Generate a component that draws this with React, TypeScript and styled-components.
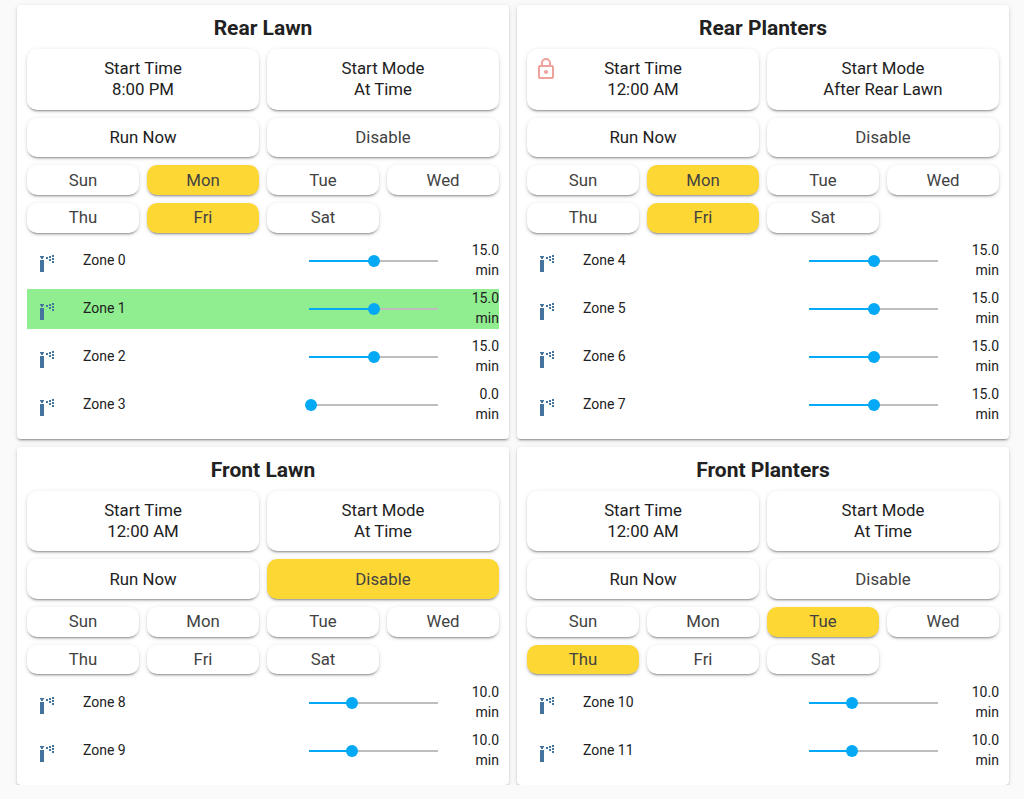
import React from 'react';
import styled, { createGlobalStyle } from 'styled-components';

const GlobalStyle = createGlobalStyle`
  *, *::before, *::after { box-sizing: border-box; }
  body {
    margin: 0;
    background: #fafafa;
    color: #212121;
    font-family: Roboto, "Liberation Sans", sans-serif;
    font-size: 14px;
  }
`;

const shadow = '0 2px 2px 0 rgba(0,0,0,0.14), 0 1px 5px 0 rgba(0,0,0,0.12), 0 3px 1px -2px rgba(0,0,0,0.2)';

const Board = styled.main`
  display: grid;
  grid-template-columns: 492px 492px;
  gap: 8px;
  padding: 5.3px 0 0 17px;
`;

const Card = styled.section`
  padding: 0 10px 14.15px;
  background: #fff;
  border-radius: 4px;
  box-shadow: ${shadow};
`;

const Title = styled.h2`
  margin: 0;
  height: 43.9px;
  padding-top: 2px;
  font-size: 21px;
  font-weight: 700;
  line-height: 42px;
  text-align: center;
`;

const ActionGrid = styled.div`
  display: grid;
  grid-template-columns: repeat(2, 1fr);
  gap: 8.1px 8px;
  margin-bottom: 8px;
`;

const DayGrid = styled.div`
  display: grid;
  grid-template-columns: repeat(4, 1fr);
  gap: 7.8px 8px;
  margin-bottom: 8.1px;
`;

const Button = styled.button<{ $height: number; $active?: boolean; $muted?: boolean }>`
  position: relative;
  display: flex;
  flex-direction: column;
  align-items: center;
  justify-content: center;
  height: ${(p) => p.$height}px;
  padding: 0 0 0.2px;
  border: 0;
  border-radius: 10px;
  background: ${(p) => (p.$active ? '#fdd835' : '#fff')};
  box-shadow: ${shadow};
  color: ${(p) => (p.$muted ? '#424242' : '#212121')};
  font: 400 16.8px/21px Roboto, "Liberation Sans", sans-serif;
`;

const LockBadge = styled.svg`
  position: absolute;
  left: 7px;
  top: 8px;
  width: 24px;
  height: 24px;
  fill: #f0a19b;
`;

const ZoneList = styled.div`
  display: flex;
  flex-direction: column;
  gap: 8px;
`;

const ZoneRow = styled.div<{ $running?: boolean }>`
  display: grid;
  grid-template-columns: 56px 226px 129px 1fr;
  align-items: center;
  height: 40px;
  background: ${(p) => (p.$running ? '#90ee90' : 'transparent')};
`;

const ZoneIcon = styled.svg`
  width: 24px;
  height: 24px;
  margin: 4px 0 0 8px;
  fill: #44739e;
`;

const ZoneName = styled.span`
  line-height: 20px;
  margin-top: -2px;
`;

const Track = styled.div`
  position: relative;
  height: 2px;
  background: #bdbdbd;
`;

const Fill = styled.div`
  height: 2px;
  background: #03a9f4;
`;

const Knob = styled.div`
  position: absolute;
  top: -5px;
  width: 12px;
  height: 12px;
  margin-left: -6px;
  border-radius: 50%;
  background: #03a9f4;
`;

const Duration = styled.span`
  justify-self: end;
  width: 36px;
  margin-top: -2px;
  line-height: 20px;
  text-align: right;
`;

type Zone = { id: number; minutes: number; running?: boolean };
type Program = {
  name: string;
  time: string;
  mode: string;
  locked?: boolean;
  disabled?: boolean;
  days: string[];
  zones: Zone[];
};

const WEEK = ['Sun', 'Mon', 'Tue', 'Wed', 'Thu', 'Fri', 'Sat'];
const MAX_MINUTES = 30;
const TRACK_WIDTH = 129;

const PROGRAMS: Program[] = [
  {
    name: 'Rear Lawn', time: '8:00 PM', mode: 'At Time', days: ['Mon', 'Fri'],
    zones: [{ id: 0, minutes: 15 }, { id: 1, minutes: 15, running: true }, { id: 2, minutes: 15 }, { id: 3, minutes: 0 }],
  },
  {
    name: 'Rear Planters', time: '12:00 AM', mode: 'After Rear Lawn', locked: true, days: ['Mon', 'Fri'],
    zones: [4, 5, 6, 7].map((id) => ({ id, minutes: 15 })),
  },
  {
    name: 'Front Lawn', time: '12:00 AM', mode: 'At Time', disabled: true, days: [],
    zones: [8, 9].map((id) => ({ id, minutes: 10 })),
  },
  {
    name: 'Front Planters', time: '12:00 AM', mode: 'At Time', days: ['Tue', 'Thu'],
    zones: [10, 11].map((id) => ({ id, minutes: 10 })),
  },
];

const LockIcon = () => (
  <LockBadge viewBox="0 0 24 24">
    <path d="M12,17C10.89,17 10,16.1 10,15C10,13.89 10.89,13 12,13A2,2 0 0,1 14,15A2,2 0 0,1 12,17M18,20V10H6V20H18M18,8A2,2 0 0,1 20,10V20A2,2 0 0,1 18,22H6C4.89,22 4,21.1 4,20V10C4,8.89 4.89,8 6,8H7V6A5,5 0 0,1 12,1A5,5 0 0,1 17,6V8H18M12,3A3,3 0 0,0 9,6V8H15V6A3,3 0 0,0 12,3Z" />
  </LockBadge>
);

const SprinklerIcon = () => (
  <ZoneIcon viewBox="0 0 24 24">
    <path d="M5 9h4v12H5zM5 5h4v1L8 7v1H6V7L5 6zM11 6h2v2h-2zM14 5h2v2h-2zM14 8h2v2h-2zM17 4h2v2h-2zM17 7h2v2h-2zM17 10h2v2h-2z" />
  </ZoneIcon>
);

function ZoneControl({ zone }: { zone: Zone }) {
  const position = (zone.minutes / MAX_MINUTES) * TRACK_WIDTH;
  return (
    <ZoneRow $running={zone.running}>
      <SprinklerIcon />
      <ZoneName>Zone {zone.id}</ZoneName>
      <Track>
        <Fill style={{ width: position }} />
        <Knob style={{ left: Math.max(2, Math.round(position)) }} />
      </Track>
      <Duration>{zone.minutes.toFixed(1)} min</Duration>
    </ZoneRow>
  );
}

function ProgramCard({ program }: { program: Program }) {
  return (
    <Card>
      <Title>{program.name}</Title>
      <ActionGrid>
        <Button $height={60.45}>
          {program.locked && <LockIcon />}
          <span>Start Time</span>
          <span>{program.time}</span>
        </Button>
        <Button $height={60.45}>
          <span>Start Mode</span>
          <span>{program.mode}</span>
        </Button>
        <Button $height={39.65}>Run Now</Button>
        <Button $height={39.65} $muted $active={program.disabled}>Disable</Button>
      </ActionGrid>
      <DayGrid>
        {WEEK.map((day) => (
          <Button key={day} $height={29.8} $muted $active={program.days.includes(day)}>{day}</Button>
        ))}
      </DayGrid>
      <ZoneList>
        {program.zones.map((zone) => <ZoneControl key={zone.id} zone={zone} />)}
      </ZoneList>
    </Card>
  );
}

export default function App() {
  return (
    <>
      <GlobalStyle />
      <Board>
        {PROGRAMS.map((program) => <ProgramCard key={program.name} program={program} />)}
      </Board>
    </>
  );
}
